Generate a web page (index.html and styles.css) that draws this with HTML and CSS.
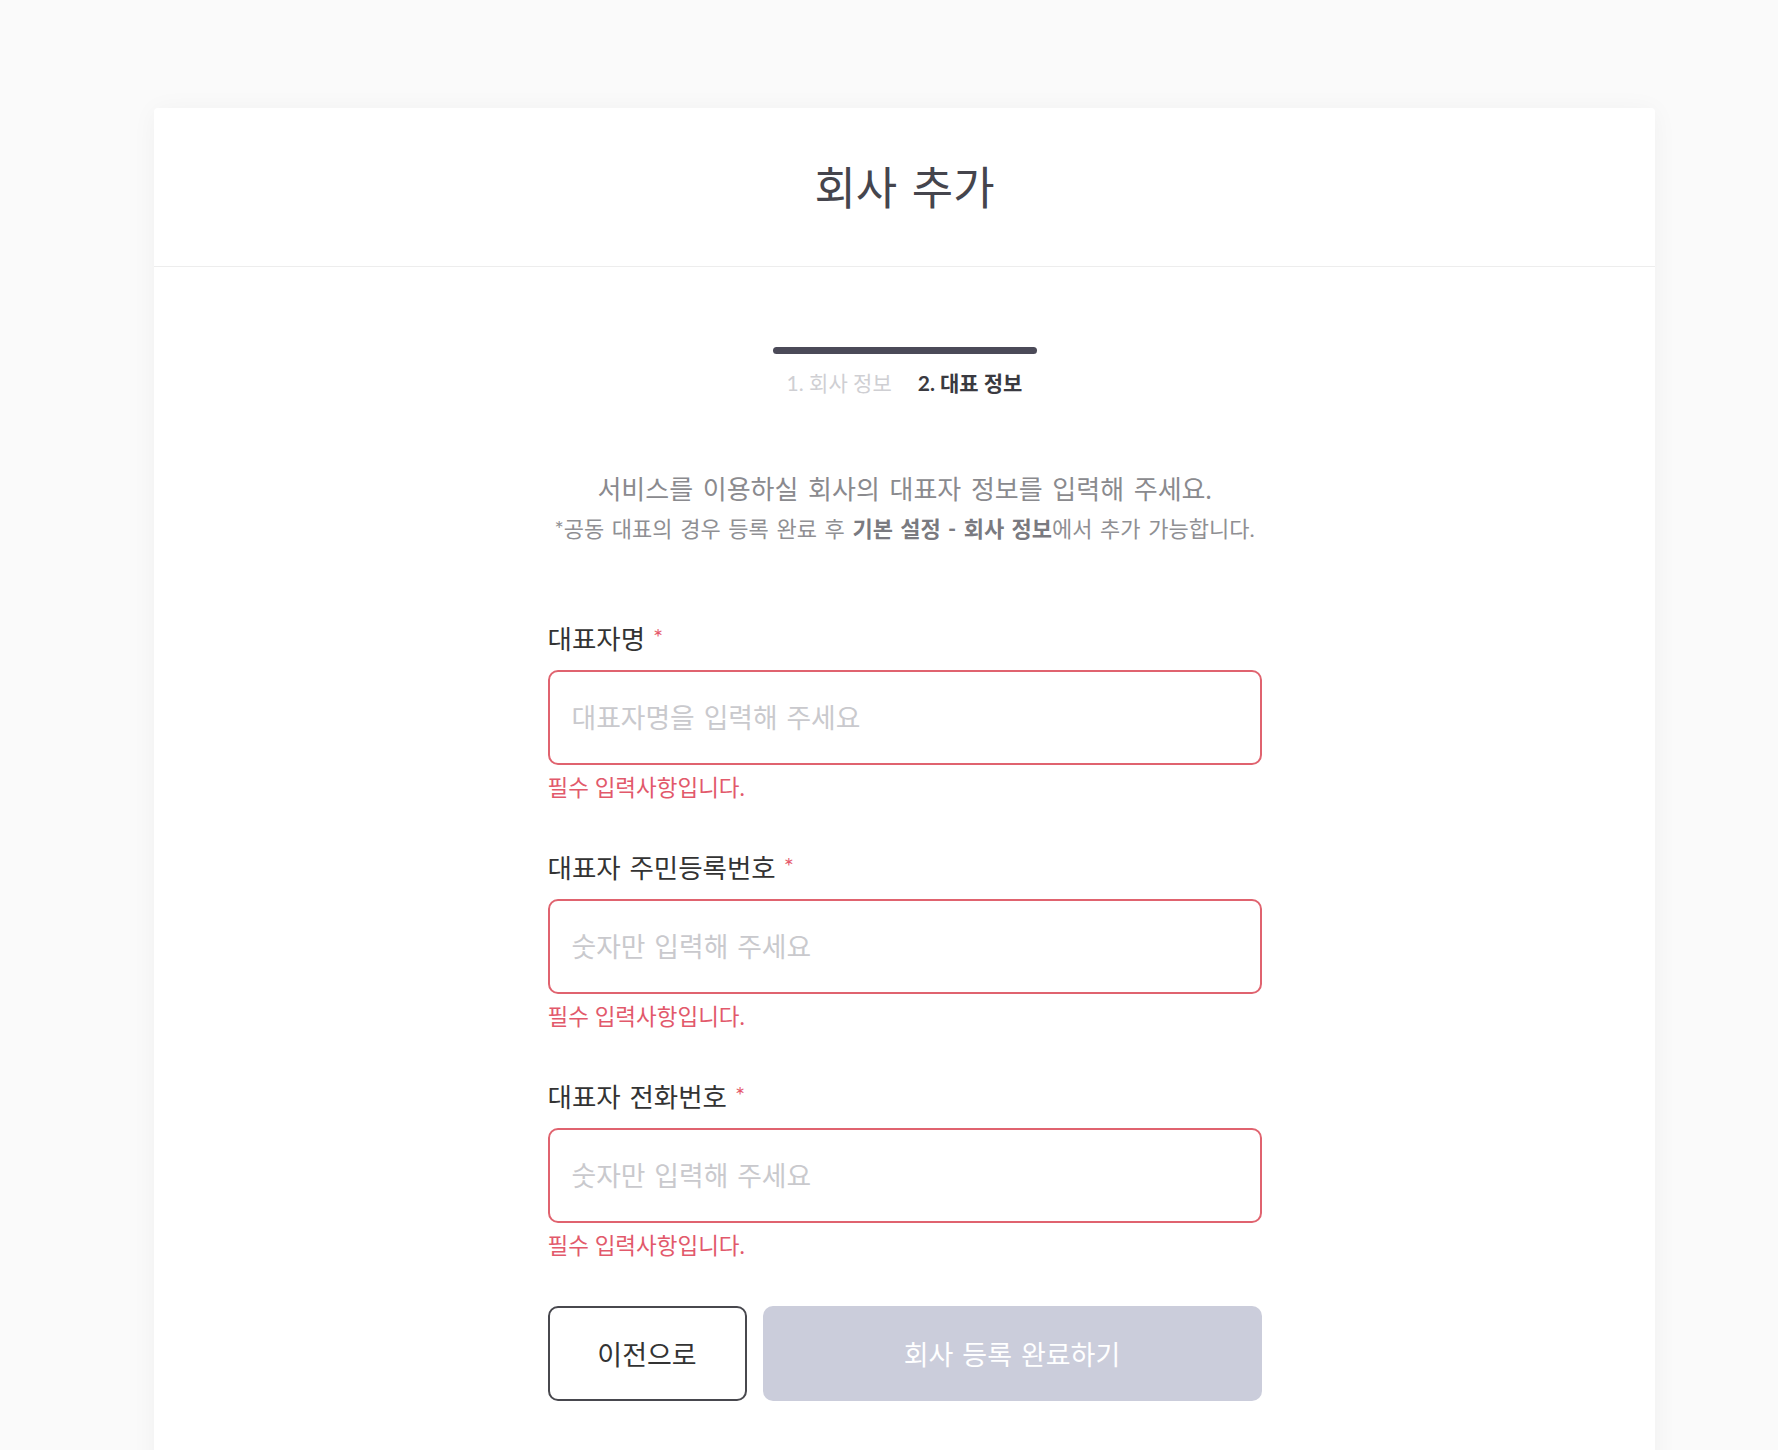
FILE: index.html
```html
<!DOCTYPE html>
<html lang="ko">
<head>
<meta charset="utf-8">
<title>회사 추가</title>
<link rel="stylesheet" href="styles.css">
</head>
<body>
<div class="page">
  <section class="card">
    <header class="card-header">
      <h1 class="title">회사 추가</h1>
    </header>
    <div class="card-body">
      <div class="steps">
        <div class="progress"></div>
        <div class="step-labels">
          <span class="step">1. 회사 정보</span>
          <span class="step step-active">2. 대표 정보</span>
        </div>
      </div>
      <div class="desc">
        <p class="desc-main">서비스를 이용하실 회사의 대표자 정보를 입력해 주세요.</p>
        <p class="desc-sub">*공동 대표의 경우 등록 완료 후 <strong>기본 설정 - 회사 정보</strong>에서 추가 가능합니다.</p>
      </div>
      <form class="form">
        <div class="field">
          <label class="label">대표자명<span class="req">*</span></label>
          <input class="input" type="text" placeholder="대표자명을 입력해 주세요">
          <p class="error">필수 입력사항입니다.</p>
        </div>
        <div class="field">
          <label class="label">대표자 주민등록번호<span class="req">*</span></label>
          <input class="input" type="text" placeholder="숫자만 입력해 주세요">
          <p class="error">필수 입력사항입니다.</p>
        </div>
        <div class="field">
          <label class="label">대표자 전화번호<span class="req">*</span></label>
          <input class="input" type="text" placeholder="숫자만 입력해 주세요">
          <p class="error">필수 입력사항입니다.</p>
        </div>
        <div class="actions">
          <button type="button" class="btn btn-prev">이전으로</button>
          <button type="button" class="btn btn-submit" disabled>회사 등록 완료하기</button>
        </div>
      </form>
    </div>
  </section>
</div>
</body>
</html>
```

FILE: styles.css
```css
* { box-sizing: border-box; }
html, body {
  margin: 0;
  padding: 0;
  background: #fafafa;
}
body {
  font-family: "Lato", "Noto Sans CJK KR", "Noto Sans", sans-serif;
  color: #333;
}
.page {
  padding: 108px 0 0 154px;
}
.card {
  width: 1501px;
  background: #fff;
  border-radius: 4px;
  box-shadow: 0 2px 26px rgba(0, 0, 0, 0.045);
  padding-bottom: 80px;
}
.card-header {
  height: 159px;
  border-bottom: 1px solid #ededed;
  display: flex;
  align-items: center;
  justify-content: center;
}
.title {
  margin: 0;
  font-size: 45px;
  font-weight: 400;
  line-height: 1;
  word-spacing: 3px;
  color: #45454d;
  padding-top: 2px;
}
.card-body {
  display: flex;
  flex-direction: column;
  align-items: center;
  padding-top: 80px;
}
.steps {
  display: flex;
  flex-direction: column;
  align-items: center;
}
.progress {
  width: 264px;
  height: 7px;
  border-radius: 4px;
  background: #4b4a58;
}
.step-labels {
  display: flex;
  gap: 26px;
  margin-top: 14px;
  font-size: 21px;
  line-height: 30px;
}
.step {
  color: #cfcfd3;
}
.step-active {
  color: #3a3a40;
  font-weight: 700;
}
.desc {
  margin-top: 71px;
  text-align: center;
}
.desc p {
  margin: 0;
  line-height: 40px;
}
.desc-main {
  font-size: 26px;
  word-spacing: 3px;
  color: #8a8a8e;
}
.desc-sub {
  font-size: 22px;
  word-spacing: 2px;
  color: #8f8f93;
}
.desc-sub strong {
  color: #7a7a80;
  font-weight: 700;
}
.form {
  width: 714px;
  margin-top: 70px;
}
.field {
  display: flex;
  flex-direction: column;
  margin-bottom: 45px;
}
.field:last-of-type {
  margin-bottom: 45px;
}
.label {
  font-size: 26.5px;
  line-height: 36px;
  word-spacing: 2px;
  color: #333;
}
.req {
  color: #e5596c;
  font-size: 24px;
  margin-left: 8px;
  vertical-align: 3px;
}
.input {
  margin-top: 13px;
  height: 95px;
  width: 100%;
  border: 2px solid #e0636f;
  border-radius: 10px;
  padding: 0 22px;
  font-family: inherit;
  font-size: 26.8px;
  word-spacing: 2px;
  color: #333;
  background: #fff;
  outline: none;
}
.input::placeholder {
  color: #c9c9cd;
}
.error {
  margin: 8px 0 0;
  font-size: 22.5px;
  line-height: 30px;
  color: #e2596b;
}
.actions {
  display: flex;
  gap: 16px;
}
.btn {
  height: 95px;
  border-radius: 10px;
  font-family: inherit;
  font-size: 27px;
  word-spacing: 2px;
  cursor: pointer;
}
.btn-prev {
  width: 199px;
  background: #fff;
  border: 2px solid #48484e;
  color: #333;
}
.btn-submit {
  flex: 1;
  background: #cbcddb;
  border: none;
  color: #fff;
}
```
